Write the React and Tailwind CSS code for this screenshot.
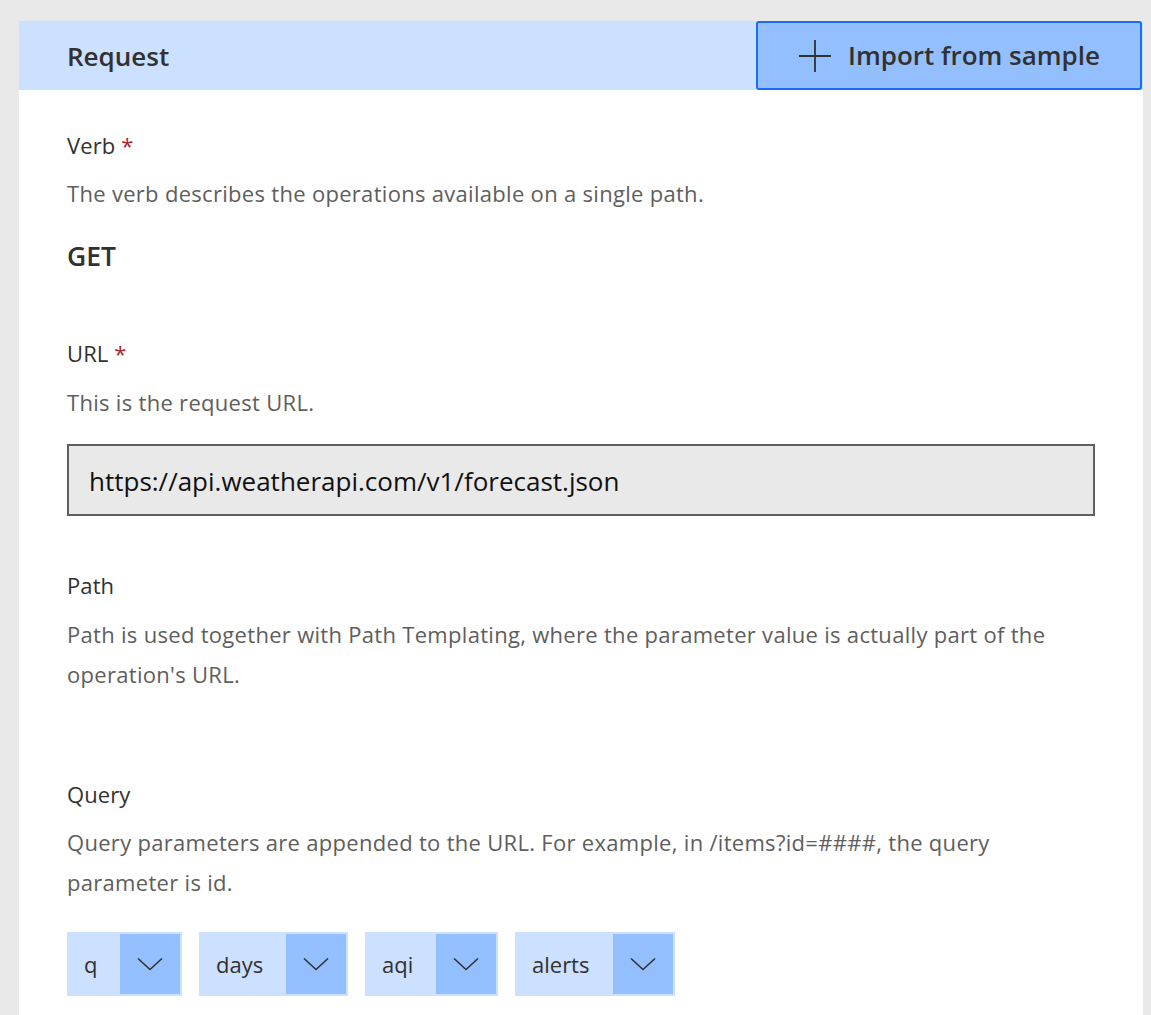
import React from "react";

const chips = [
    { name: "q", labelW: "w-[51px]" },
    { name: "days", labelW: "w-[85px]" },
    { name: "aqi", labelW: "w-[69px]" },
    { name: "alerts", labelW: "w-[96px]" },
];

function Chevron() {
    return (
        <svg width="26" height="14" viewBox="0 0 26 14" fill="none">
            <path d="M1 1.5 13 12.5 25 1.5" stroke="#323130" strokeWidth="1.6" />
        </svg>
    );
}

function Label({ children, required, className = "" }) {
    return (
        <div className={`text-[22px] leading-[28px] tracking-[0.1px] text-[#323130] ${className}`}>
            {children}
            {required && <span className="text-[#a4262c]"> *</span>}
        </div>
    );
}

function Desc({ children, className = "" }) {
    return <p className={`text-[22px] leading-[40px] tracking-[0.3px] text-[#605e5c] ${className}`}>{children}</p>;
}

export default function App() {
    return (
        <div className="min-h-screen bg-[#e9e9e9] pt-[21px] pl-[19px] pr-[8px] font-['Segoe_UI','Open_Sans',sans-serif]">
            <div className="bg-white pb-[40px]">
                {/* ヘッダー */}
                <div className="flex h-[69px] items-center justify-between bg-[#cce0ff]">
                    <h2 className="pl-[48px] pt-[2px] text-[26px] font-semibold text-[#323130]">Request</h2>
                    <button className="mr-[1px] flex h-[69px] w-[386px] items-center justify-center gap-[16px] rounded-[3px] border-2 border-[#1a6cf5] bg-[#94bfff]">
                        <svg width="34" height="34" viewBox="0 0 34 34" fill="none">
                            <path d="M17 1v32M1 17h32" stroke="#323130" strokeWidth="1.8" />
                        </svg>
                        <span className="text-[26px] font-semibold text-[#323130]">Import from sample</span>
                    </button>
                </div>

                <div className="px-[48px]">
                    <Label required className="mt-[41px]">Verb</Label>
                    <Desc className="mt-[14px]">The verb describes the operations available on a single path.</Desc>
                    <div className="mt-[27px] text-[26.5px] leading-[32px] font-semibold text-[#323130]">GET</div>

                    <Label required className="mt-[67px]">URL</Label>
                    <Desc className="mt-[15px]">This is the request URL.</Desc>
                    <div className="mt-[22px] flex h-[72px] w-[1028px] items-center border-2 border-[#5f5f5f] bg-[#e9e9e9] pl-[20px] pt-[2px] text-[26px] text-[#111]">
                        https://api.weatherapi.com/v1/forecast.json
                    </div>

                    <Label className="mt-[55px]">Path</Label>
                    <Desc className="mt-[15px]">
                        Path is used together with Path Templating, where the parameter value is actually part of the operation's URL.
                    </Desc>

                    <Label className="mt-[86px]">Query</Label>
                    <Desc className="mt-[14px]">
                        Query parameters are appended to the URL. For example, in /items?id=####, the query parameter is id.
                    </Desc>

                    <div className="mt-[30px] flex gap-[17px]">
                        {chips.map((c) => (
                            <div key={c.name} className="flex h-[64px] items-center bg-[#cce0ff] p-[2px]">
                                <span className={`${c.labelW} pl-[15px] text-[22px] text-[#323130]`}>{c.name}</span>
                                <span className="flex h-[60px] w-[60px] items-center justify-center bg-[#94bfff]">
                                    <Chevron />
                                </span>
                            </div>
                        ))}
                    </div>
                </div>
            </div>
        </div>
    );
}
